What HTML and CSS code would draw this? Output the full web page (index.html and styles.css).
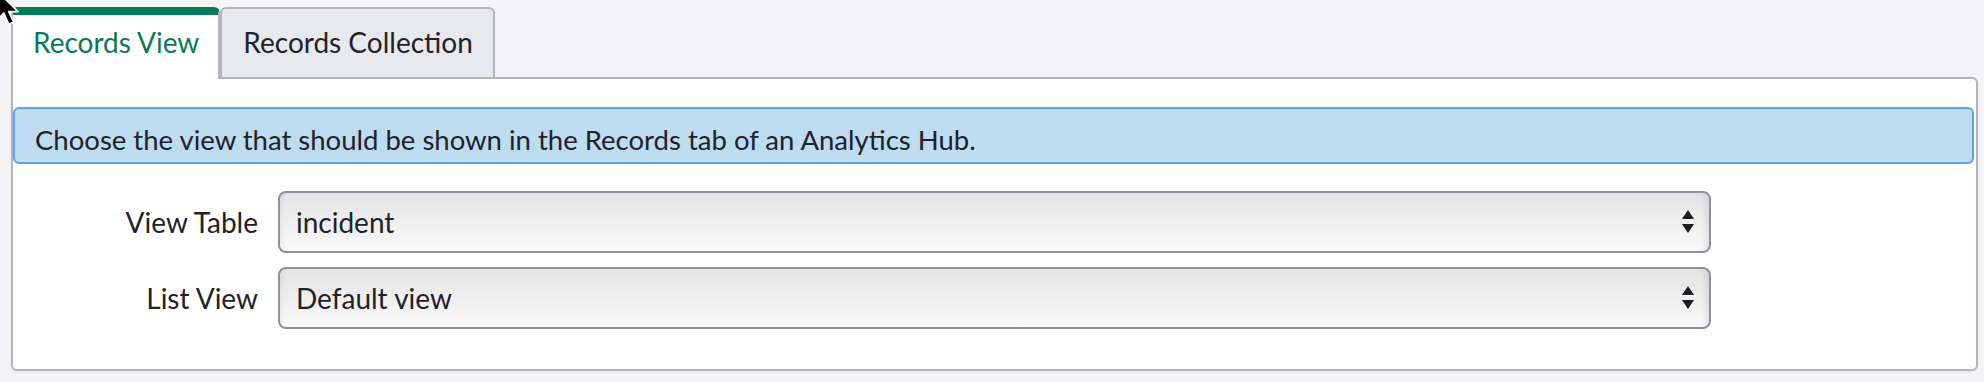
FILE: index.html
```html
<!DOCTYPE html>
<html lang="en">
<head>
<meta charset="utf-8">
<title>Records View</title>
<link rel="stylesheet" href="styles.css">
</head>
<body>
<div class="tabs">
  <div class="tab tab-active">Records View</div>
  <div class="tab">Records Collection</div>
</div>
<div class="panel">
  <div class="info">Choose the view that should be shown in the Records tab of an Analytics Hub.</div>
  <div class="form">
    <div class="row">
      <div class="label">View Table</div>
      <div class="select">
        <span class="value">incident</span>
        <svg class="arrows" width="14" height="26" viewBox="0 0 14 26"><path d="M7 1 L13 10 L1 10 Z M1 15 L13 15 L7 24 Z" fill="#1b1d22"/></svg>
      </div>
    </div>
    <div class="row">
      <div class="label">List View</div>
      <div class="select">
        <span class="value">Default view</span>
        <svg class="arrows" width="14" height="26" viewBox="0 0 14 26"><path d="M7 1 L13 10 L1 10 Z M1 15 L13 15 L7 24 Z" fill="#1b1d22"/></svg>
      </div>
    </div>
  </div>
</div>
<svg class="cursor" width="33" height="44" viewBox="0 0 30 40"><path d="M2 2 L2 28 L8 22 L12.5 32 L17 30 L12.5 20.5 L21 20.5 Z" fill="#000" stroke="#fff" stroke-width="1.5" stroke-linejoin="round"/></svg>
</body>
</html>
```
FILE: styles.css
```css
html, body {
  margin: 0;
  background: #f4f4f6;
}
body {
  padding: 7px 6px 0 11px;
  font-family: Lato, "Open Sans", sans-serif;
  color: #1f2228;
  position: relative;
  height: 375px;
  box-sizing: border-box;
  overflow: hidden;
}
.tabs {
  display: flex;
  align-items: flex-start;
  position: relative;
  z-index: 2;
  margin-bottom: -2px;
}
.tab {
  box-sizing: border-box;
  height: 70px;
  padding: 16px 20px 0 21px;
  font-size: 28px;
  line-height: 34px;
  background: #e8e9ed;
  border: 2px solid #b2b5be;
  border-bottom: none;
  border-radius: 6px 6px 0 0;
  white-space: nowrap;
}
.tab-active {
  height: 72px;
  background: #fff;
  color: #0a7a55;
  border-top: 8px solid #007a57;
  padding: 10px 19px 0 20px;
}
.panel {
  background: #fff;
  border: 2px solid #b2b5be;
  border-radius: 0 6px 6px 6px;
  box-shadow: 0 1px 3px rgba(0,0,0,0.08);
  padding: 28px 2px 40px 0;
}
.info {
  background: #bddcf0;
  border: 2px solid #5ca6dc;
  border-radius: 6px;
  font-size: 27.5px;
  line-height: 33px;
  height: 57px;
  box-sizing: border-box;
  padding: 14px 20px 0 20px;
  white-space: nowrap;
}
.form {
  margin-top: 27px;
  display: flex;
  flex-direction: column;
  gap: 14px;
}
.row {
  display: flex;
  align-items: center;
  gap: 20px;
}
.label {
  width: 245px;
  text-align: right;
  font-size: 28px;
  line-height: 34px;
}
.select {
  box-sizing: border-box;
  width: 1433px;
  height: 62px;
  border: 2px solid #8f929c;
  border-radius: 8px;
  background: linear-gradient(#e4e4e4, #f3f3f3 70%, #fafafa);
  box-shadow: inset -10px 0 8px -8px rgba(0,0,0,0.12), inset 8px 0 8px -8px rgba(0,0,0,0.08);
  display: flex;
  align-items: center;
  justify-content: space-between;
  padding: 0 14px 0 16px;
  font-size: 28px;
}
.value {
  line-height: 34px;
  padding-bottom: 1px;
}
.arrows {
  display: block;
}
.cursor {
  position: absolute;
  left: -5px;
  top: -11px;
  z-index: 5;
}
```
